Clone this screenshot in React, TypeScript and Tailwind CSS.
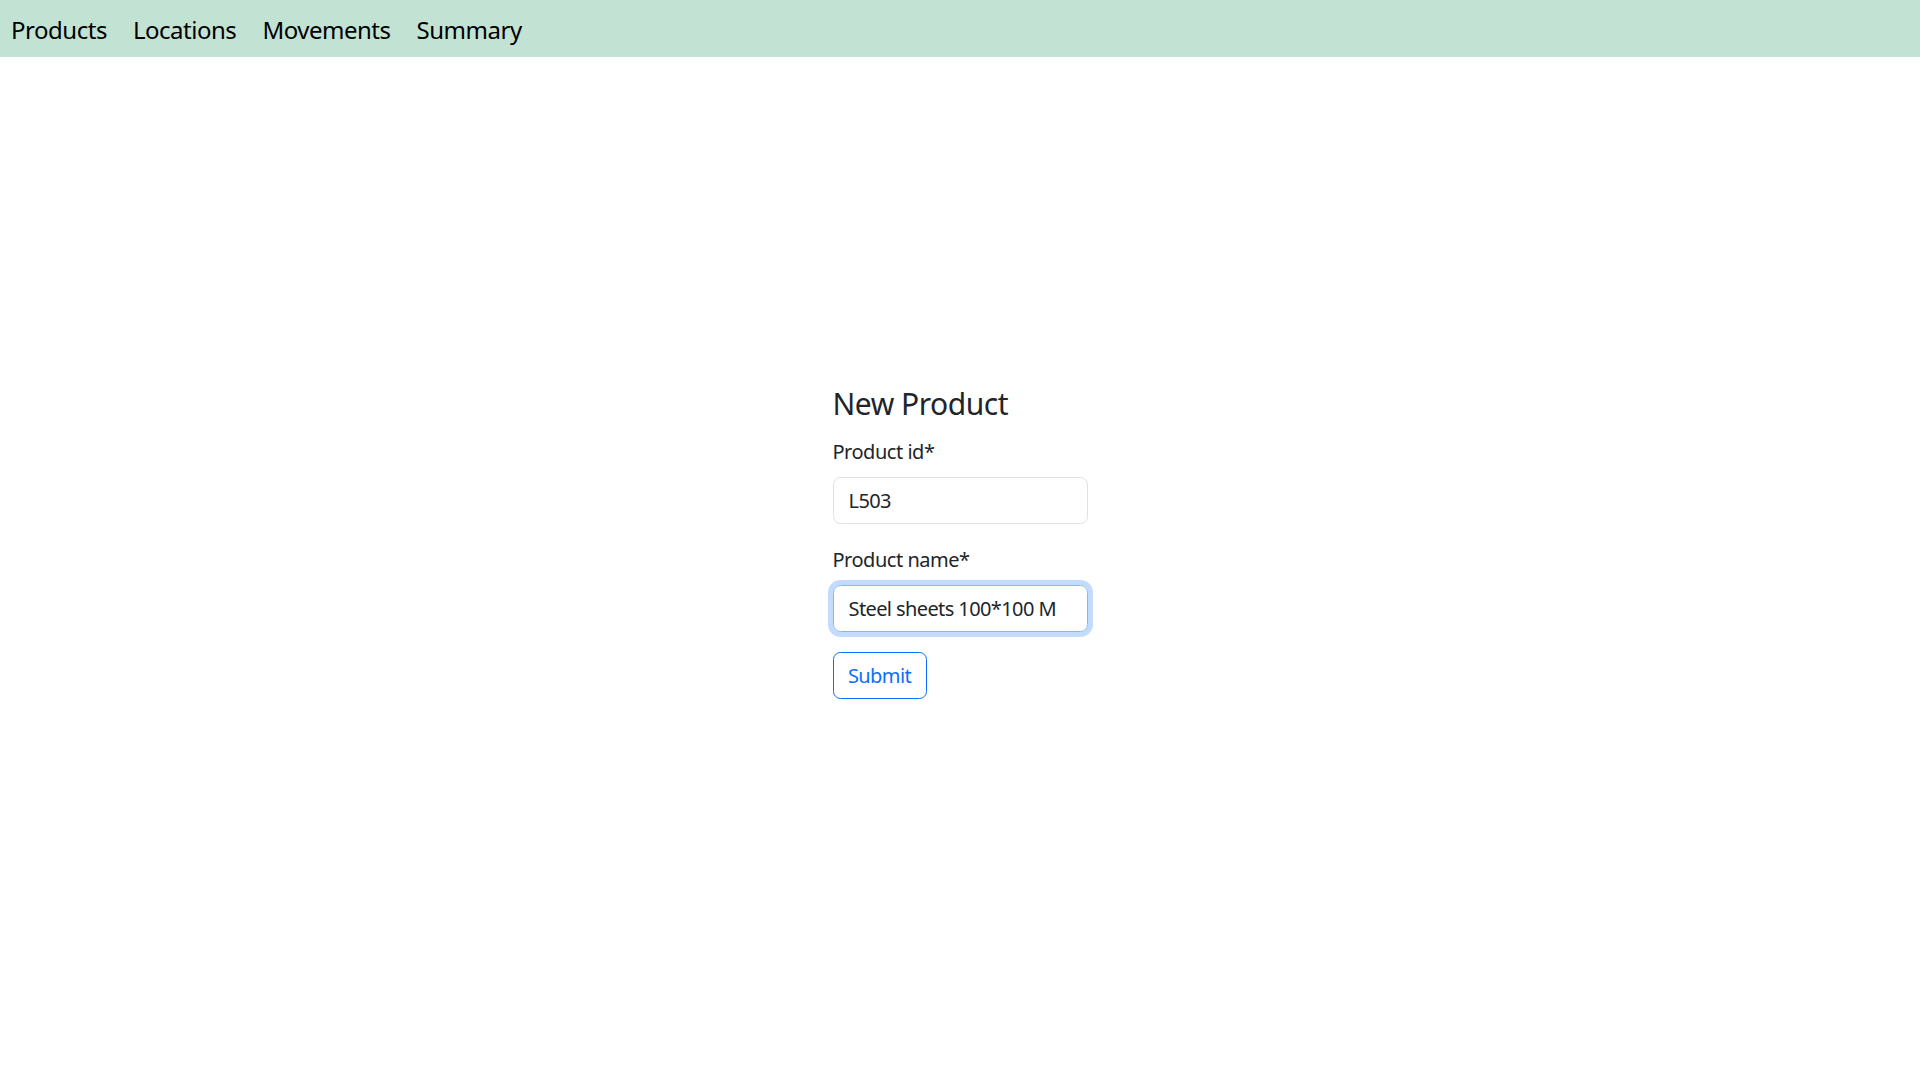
export default function App() {
  return (
    <div className="min-h-screen bg-white font-['Noto_Sans','Open_Sans',sans-serif] text-[#212529]">
      <nav className="h-[57px] bg-[#c2e2d3] flex items-center pl-[11px] pt-[2px] gap-[26px] text-[24px] tracking-[-0.02em] text-black">
        <a href="#" className="leading-none">Products</a>
        <a href="#" className="leading-none">Locations</a>
        <a href="#" className="leading-none">Movements</a>
        <a href="#" className="leading-none">Summary</a>
      </nav>

      <main className="flex justify-center pt-[328px]">
        <form className="w-[255px] flex flex-col tracking-[-0.03em]" onSubmit={(e) => e.preventDefault()}>
          <h4 className="text-[30px] leading-[36px] font-normal mt-[1px] mb-[14px]">New Product</h4>

          <label className="text-[20px] leading-[30px] pt-[1px] mb-[10px]">Product id*</label>
          <input
            defaultValue="L503"
            className="h-[47px] w-full rounded-[7.5px] border border-[#dee2e6] px-[15px] text-[20px] tracking-[-0.03em] outline-none"
          />

          <label className="text-[20px] leading-[30px] mt-[20px] pt-[1px] mb-[10px]">Product name*</label>
          <input
            defaultValue="Steel sheets 100*100 M"
            className="h-[47px] w-full rounded-[7.5px] border border-[#86b7fe] px-[15px] text-[20px] tracking-[-0.03em] outline-none shadow-[0_0_0_5px_rgba(13,110,253,0.25)]"
          />

          <div className="mt-[20px]">
            <button
              type="submit"
              className="h-[47px] w-[94px] rounded-[7.5px] border border-[#0d6efd] text-[#0d6efd] text-[20px] tracking-[-0.03em] bg-white"
            >
              Submit
            </button>
          </div>
        </form>
      </main>
    </div>
  );
}
